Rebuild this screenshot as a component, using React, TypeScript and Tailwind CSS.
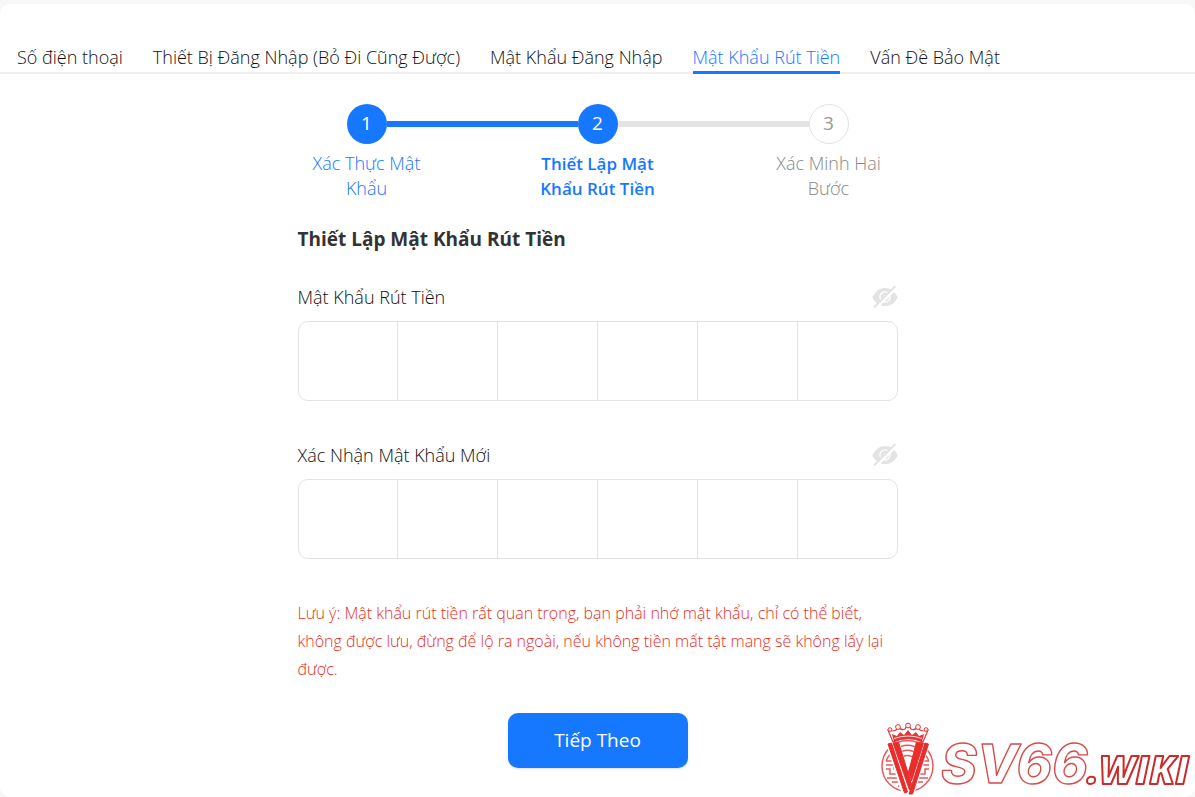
import { useState } from "react";
import clsx from "clsx";

const tabs = [
  "Số điện thoại",
  "Thiết Bị Đăng Nhập (Bỏ Đi Cũng Được)",
  "Mật Khẩu Đăng Nhập",
  "Mật Khẩu Rút Tiền",
  "Vấn Đề Bảo Mật",
];

const steps = ["Xác Thực Mật Khẩu", "Thiết Lập Mật Khẩu Rút Tiền", "Xác Minh Hai Bước"];

const EyeOff = () => (
  <svg viewBox="0 0 26 22" className="h-[22px] w-[26px]" aria-hidden="true">
    <path d="M0.3 11.5C3.5 5 8 2 13 2S22.8 5 25.7 11.5C22.8 17.5 18.4 20 13 20S3.5 17.5 0.3 11.5Z" fill="#e3e3e3" />
    <circle cx="13" cy="11" r="5.8" fill="#fff" />
    <circle cx="13" cy="11" r="3.2" fill="none" stroke="#e3e3e3" strokeWidth="2.4" />
    <path d="M4 22L24.4 2" stroke="#fff" strokeWidth="2.6" />
    <path d="M2.6 20.8L22.8 0.8" stroke="#e3e3e3" strokeWidth="2" strokeLinecap="round" />
  </svg>
);

const PinField = ({ label, name }: { label: string; name: string }) => {
  const [visible, setVisible] = useState(false);

  return (
    <div role="group" aria-labelledby={name}>
      <div className="mb-3 flex h-6 items-center justify-between">
        <span id={name}>{label}</span>
        <button type="button" aria-label={label} onClick={() => setVisible(!visible)}>
          <EyeOff />
        </button>
      </div>
      <div className="flex h-20 divide-x divide-[#e3e3e3] overflow-hidden rounded-[10px] border border-[#e3e3e3]">
        {[1, 2, 3, 4, 5, 6].map((n) => (
          <input
            key={n}
            type={visible ? "text" : "password"}
            inputMode="numeric"
            maxLength={1}
            autoComplete="off"
            aria-label={`${label} ${n}`}
            className="w-0 flex-1 text-center text-2xl outline-none"
          />
        ))}
      </div>
    </div>
  );
};

const Stepper = () => (
  <div>
    <div className="flex items-center px-[49px]">
      {steps.map((step, i) => (
        <div key={step} className={clsx("flex items-center", i > 0 && "flex-1")}>
          {i > 0 && <div className={clsx("h-1.5 flex-1", i === 1 ? "bg-[#1678ff]" : "bg-[#e3e3e3]")} />}
          <span
            className={clsx(
              "flex size-10 items-center justify-center rounded-full text-[19px] font-normal",
              i < 2 ? "bg-[#1678ff] text-white" : "border border-[#e3e3e3] text-[#999]",
            )}
          >
            {i + 1}
          </span>
        </div>
      ))}
    </div>
    <div className="mt-[7px] flex justify-between text-center">
      {steps.map((step, i) => (
        <span
          key={step}
          className={clsx(
            "w-[138px] px-2",
            i < 2 ? "text-[#1678ff]" : "text-[#888]",
            i === 1 ? "text-[17px]/[25px] font-semibold" : "text-lg/[25px]",
          )}
        >
          {step}
        </span>
      ))}
    </div>
  </div>
);

const Logo = () => (
  <svg viewBox="0 0 315 80" className="h-20 w-[315px]" role="img" aria-label="SV66.WIKI">
    {/* Round emblem */}
    <g fill="none" stroke="#e8595b" strokeWidth="1.5">
      <circle cx="27.5" cy="49" r="25.5" />
      <path d="M15 33A19 19 0 0 1 40 33M18 37A14 14 0 0 1 37 37M20 42A10 10 0 0 1 35 42" />
      <path d="M12 36Q7 40 6.500 44H18M14 40H10M6 48H14V52H21M6 52H10V57H22M7 61H23M12 65H24M18 69H25" />
      <path d="M43 36Q48 40 48.500 44H38M41 40H45M49 48H41V52H35M49 52H45V57H34M48 61H33M43 65H32M37 69H31" />
    </g>
    <path d="M6 26H20L28 54L36 26H50L34 78H22Z" fill="#fff" />
    <path
      d="M8 27L11.500 26L27.500 75L24.500 76ZM13 26L18.500 25L31.500 67L29.500 73ZM36.500 25L43.500 26L31.500 64L28.500 55ZM45 26L48.500 27L32.500 77H29Z"
      fill="#e92c2c"
      stroke="#e92c2c"
      strokeWidth="1"
    />
    {/* Crown */}
    <path d="M8 13Q13 15 16 13L18 10Q22 14 25 12L28 7L31 12Q34 14 38 10L40 13Q43 15 48 13L43 25Q28 18 13 25Z" fill="#fff" stroke="#e2373a" strokeWidth="1.2" />
    <path d="M12 17L17 19L20 15L24 18L28 13L32 18L36 15L39 19L44 17L42 25Q28 19 14 25Z" fill="#e2373a" />
    <path d="M14 21.500Q28 16.500 42 21.500" fill="none" stroke="#fff" strokeWidth="0.800" />
    <g fill="#fff" stroke="#e2373a" strokeWidth="1">
      <circle cx="10" cy="12.500" r="1.800" />
      <circle cx="18" cy="10" r="2.400" />
      <circle cx="28" cy="8.500" r="2.400" />
      <circle cx="38" cy="10" r="2.400" />
      <circle cx="46" cy="12.500" r="1.800" />
    </g>
    {/* Word mark */}
    <g fill="#fff" strokeLinejoin="round">
      <text x="61" y="66" fontSize="54" stroke="#d94a4a" strokeWidth="1.400" className="font-['Inter',sans-serif] font-extrabold italic">
        SV66
      </text>
      <text x="207" y="67" fontSize="39" stroke="#cc2b2b" strokeWidth="2" className="font-['Open_Sans',sans-serif] font-extrabold italic">
        .WIKI
      </text>
    </g>
  </svg>
);

const App = () => {
  return (
    <div className="min-h-screen bg-[#f7f7f7] pt-1 font-['Open_Sans','Noto_Sans',sans-serif] text-lg font-light text-[#111]">
      <main className="min-h-[calc(100vh-4px)] rounded-[10px] bg-white">
        <nav className="flex h-[70px] items-end gap-[30px] border-b-2 border-[#f0f0f0] px-[17px]">
          {tabs.map((tab, i) => (
            <a
              key={tab}
              href="#"
              className={clsx(
                "-mb-0.5 border-b-3 pb-px leading-[25px] whitespace-nowrap",
                i === 3 ? "border-[#1678ff] text-[#1678ff]" : "border-transparent",
              )}
            >
              {tab}
            </a>
          ))}
        </nav>

        <form className="mx-auto max-w-[600px] pt-[30px]" onSubmit={(e) => e.preventDefault()}>
          <Stepper />
          <h1 className="mt-6 mb-8 text-[19px] leading-7 font-bold text-[#333]">Thiết Lập Mật Khẩu Rút Tiền</h1>
          <div className="flex flex-col gap-[42px]">
            <PinField label="Mật Khẩu Rút Tiền" name="pin" />
            <PinField label="Xác Nhận Mật Khẩu Mới" name="pin-confirm" />
          </div>
          <p className="mt-10 text-base leading-7 text-[#e5301f]">
            Lưu ý: Mật khẩu rút tiền rất quan trọng, bạn phải nhớ mật khẩu, chỉ có thể biết, không được lưu, đừng để
            lộ ra ngoài, nếu không tiền mất tật mang sẽ không lấy lại được.
          </p>
          <button
            type="submit"
            className="mx-auto mt-[30px] flex h-[55px] w-[180px] items-center justify-center rounded-[10px] bg-[#1678ff] text-[19px] font-normal text-white shadow-sm"
          >
            Tiếp Theo
          </button>
        </form>
      </main>

      <div className="fixed right-0 bottom-0">
        <Logo />
      </div>
    </div>
  );
};

export default App;
